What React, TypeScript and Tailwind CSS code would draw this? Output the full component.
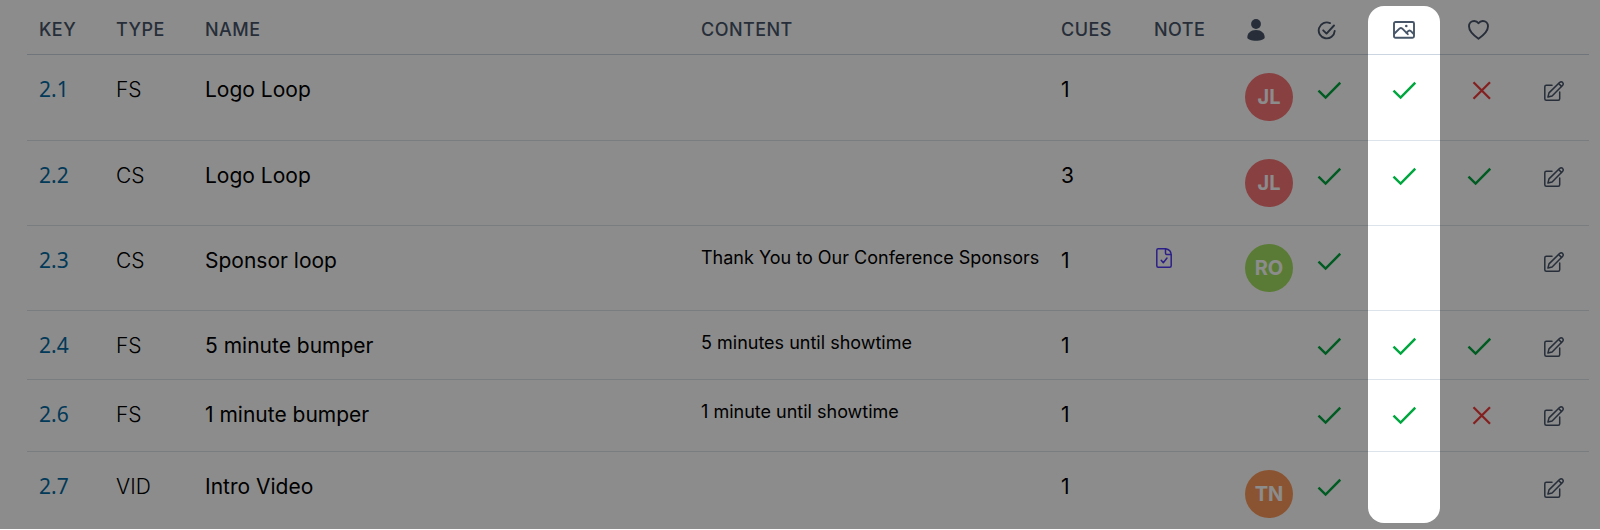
import type { ReactNode } from "react";

interface Person {
  initials: string;
  color: string;
}

interface Slide {
  key: string;
  type: string;
  name: string;
  content?: string;
  cues: number;
  hasNote?: boolean;
  person?: Person;
  done?: boolean;
  image?: boolean;
  approved?: boolean;
  height: string;
}

const JL: Person = { initials: "JL", color: "bg-[#f87575]" };
const RO: Person = { initials: "RO", color: "bg-[#a5e062]" };
const TN: Person = { initials: "TN", color: "bg-[#fb9a5b]" };

const slides: Slide[] = [
  { key: "2.1", type: "FS", name: "Logo Loop", cues: 1, person: JL, done: true, image: true, approved: false, height: "h-[86px]" },
  { key: "2.2", type: "CS", name: "Logo Loop", cues: 3, person: JL, done: true, image: true, approved: true, height: "h-[85px]" },
  { key: "2.3", type: "CS", name: "Sponsor loop", content: "Thank You to Our Conference Sponsors", cues: 1, hasNote: true, person: RO, done: true, height: "h-[85px]" },
  { key: "2.4", type: "FS", name: "5 minute bumper", content: "5 minutes until showtime", cues: 1, done: true, image: true, approved: true, height: "h-[69px]" },
  { key: "2.6", type: "FS", name: "1 minute bumper", content: "1 minute until showtime", cues: 1, done: true, image: true, approved: false, height: "h-[72px]" },
  { key: "2.7", type: "VID", name: "Intro Video", cues: 1, person: TN, done: true, height: "h-[78px]" },
];

function PersonIcon() {
  return (
    <svg width="18" height="22" viewBox="0 0 18 22" fill="currentColor" aria-hidden="true">
      <circle cx="9" cy="5" r="4.9" />
      <path d="M9 11c5.4 0 8.7 3.2 8.7 7.6 0 1.9-4 3.2-8.7 3.2S.3 20.5.3 18.6C.3 14.2 3.6 11 9 11z" />
    </svg>
  );
}

function CircleCheckIcon() {
  return (
    <svg width="20" height="20" viewBox="0 0 20 20" fill="none" stroke="currentColor" strokeWidth="1.9" strokeLinecap="round" strokeLinejoin="round" aria-hidden="true">
      <path d="M13 3.1A8 8 0 1 0 17.7 11" />
      <path d="M6.2 10.3 9.5 13.6 17 5.5" />
    </svg>
  );
}

function ImageIcon() {
  return (
    <svg width="22" height="18" viewBox="0 0 22 18" fill="none" stroke="currentColor" strokeWidth="1.9" strokeLinecap="round" strokeLinejoin="round" aria-hidden="true">
      <rect x="1" y="1" width="20" height="15.8" rx="1.5" />
      <path d="M1.5 12.5 6.7 7.4Q7.9 6.5 9.1 7.4L14.8 13.2" />
      <path d="M13.5 11.8 15.5 9.9Q16.5 9.1 17.6 9.9L20.5 12.7" />
      <circle cx="13.3" cy="5" r="1.3" fill="currentColor" stroke="none" />
    </svg>
  );
}

function HeartIcon() {
  return (
    <svg width="21" height="20" viewBox="0 0 21 20" fill="none" stroke="currentColor" strokeWidth="1.9" strokeLinejoin="round" aria-hidden="true">
      <path d="M10.5 3.3C9.5 1.8 8 1 6.2 1 3.3 1 1 3.3 1 6.3c0 5.2 5.5 9.7 9.5 12.4 4-2.7 9.5-7.2 9.5-12.4C20 3.3 17.7 1 14.8 1c-1.8 0-3.3.8-4.3 2.3z" />
    </svg>
  );
}

function CheckIcon() {
  return (
    <svg className="text-[#00a63e]" width="24" height="24" viewBox="0 0 24 24" fill="none" stroke="currentColor" strokeWidth="2.5" role="img" aria-label="Yes">
      <path d="M1.5 12.7 8.6 19.6 23.3 4.7" />
    </svg>
  );
}

function CrossIcon() {
  return (
    <svg className="text-[#f03a3a]" width="30" height="24" viewBox="0 0 30 24" fill="none" stroke="currentColor" strokeWidth="2.3" role="img" aria-label="No">
      <path d="M6.5 4.3 23 20.7M23 4.3 6.5 20.7" />
    </svg>
  );
}

function NoteIcon() {
  return (
    <svg width="16" height="20" viewBox="0 0 16 20" fill="none" stroke="currentColor" strokeWidth="1.5" strokeLinecap="round" strokeLinejoin="round" aria-hidden="true">
      <path d="M2.2.8H9.5Q15.2 1.8 15.2 7V17.7Q15.2 19.2 13.7 19.2H2.2Q.8 19.2.8 17.7V2.2Q.8.8 2.2.8z" />
      <path d="M9.5.8V5.2Q9.5 6.6 11 6.6H15" />
      <path d="M5.2 12.3 7.3 14.7 11 10" />
    </svg>
  );
}

function EditIcon() {
  return (
    <svg width="20" height="20" viewBox="0 0 20 20" fill="none" stroke="currentColor" strokeWidth="1.5" strokeLinecap="round" strokeLinejoin="round" aria-hidden="true">
      <path d="M8 4.3H2.3Q.8 4.3.8 5.8V17.7Q.8 19.2 2.3 19.2H14.2Q15.7 19.2 15.7 17.7V11" />
      <path d="M3.9 16.1 5 11.9 15.8 1.3Q17.2.2 18.6 1.4 19.8 2.8 18.7 4.2L8.1 15z" />
      <path d="M14.6 2.5 17.5 5.4" />
    </svg>
  );
}

function Status({ value }: { value?: boolean }) {
  if (value === undefined) return null;
  return value ? <CheckIcon /> : <CrossIcon />;
}

function Avatar({ person }: { person: Person }) {
  return (
    <span className={`flex size-12 items-center justify-center rounded-full text-[20px] font-bold text-white ${person.color}`}>
      {person.initials}
    </span>
  );
}

function HeadCell({ children, label }: { children?: ReactNode; label?: string }) {
  return (
    <th scope="col" aria-label={label} className="px-3 pt-1.5 text-left align-middle font-medium">
      {children}
    </th>
  );
}

export default function App() {
  return (
    <div className="bg-white pb-px font-['Inter','Liberation_Sans',sans-serif] text-black">
      <div className="relative overflow-hidden pl-[27px] pr-[11px]">
        <table className="w-full table-fixed border-collapse">
          <colgroup>
            <col className="w-[77px]" />
            <col className="w-[89px]" />
            <col />
            <col className="w-[360px]" />
            <col className="w-[93px]" />
            <col className="w-[91px]" />
            <col className="w-[72px]" />
            <col className="w-[75px]" />
            <col className="w-[75px]" />
            <col className="w-[75px]" />
            <col className="w-[59px]" />
          </colgroup>
          <thead>
            <tr className="h-[54px] border-b border-[#cbd5e1] text-[18px] leading-6 tracking-wide text-[#475569]">
              <HeadCell>KEY</HeadCell>
              <HeadCell>TYPE</HeadCell>
              <HeadCell>NAME</HeadCell>
              <HeadCell>CONTENT</HeadCell>
              <HeadCell>CUES</HeadCell>
              <HeadCell>NOTE</HeadCell>
              <HeadCell label="Assigned to">
                <span className="flex pl-0.5"><PersonIcon /></span>
              </HeadCell>
              <HeadCell label="Done"><CircleCheckIcon /></HeadCell>
              <HeadCell label="Image">
                <span className="flex pl-px"><ImageIcon /></span>
              </HeadCell>
              <HeadCell label="Approved">
                <span className="flex pl-px"><HeartIcon /></span>
              </HeadCell>
              <HeadCell label="Edit" />
            </tr>
          </thead>
          <tbody>
            {slides.map((slide) => (
              <tr
                key={slide.key}
                className={`border-b border-[#dde3ea] align-top text-[21px] leading-8 last:border-b-0 ${slide.height}`}
              >
                <td className="px-3 pt-[18px] font-['Noto_Sans','Liberation_Sans',sans-serif]">
                  <a href={`#${slide.key}`} className="text-[#0369a1]">{slide.key}</a>
                </td>
                <td className="px-3 pt-[19px] font-light">{slide.type}</td>
                <td className="px-3 pt-[19px]">{slide.name}</td>
                <td className="px-3 pt-[19px] text-[18px] leading-[26px] whitespace-nowrap">{slide.content}</td>
                <td className="px-3 pt-[19px]">{slide.cues}</td>
                <td className="px-3 pt-[22px]">
                  {slide.hasNote && (
                    <button type="button" aria-label="Show note" className="block pl-0.5 text-[#4f39f6]">
                      <NoteIcon />
                    </button>
                  )}
                </td>
                <td className="px-3 pt-[18px]">{slide.person && <Avatar person={slide.person} />}</td>
                <td className="px-3 pt-[23px]"><Status value={slide.done} /></td>
                <td className="px-3 pt-[23px]"><Status value={slide.image} /></td>
                <td className="px-3 pt-[23px]"><Status value={slide.approved} /></td>
                <td className="px-3 pt-[26px]">
                  <button type="button" aria-label={`Edit ${slide.key}`} className="block pl-0.5 text-[#475569]">
                    <EditIcon />
                  </button>
                </td>
              </tr>
            ))}
          </tbody>
        </table>

        {/* Spotlight on the image column, everything around it is dimmed */}
        <div className="pointer-events-none absolute top-1.5 bottom-1.5 right-[160px] w-[72px] rounded-2xl shadow-[0_0_0_9999px_rgba(0,0,0,0.45)]" />
      </div>
    </div>
  );
}
